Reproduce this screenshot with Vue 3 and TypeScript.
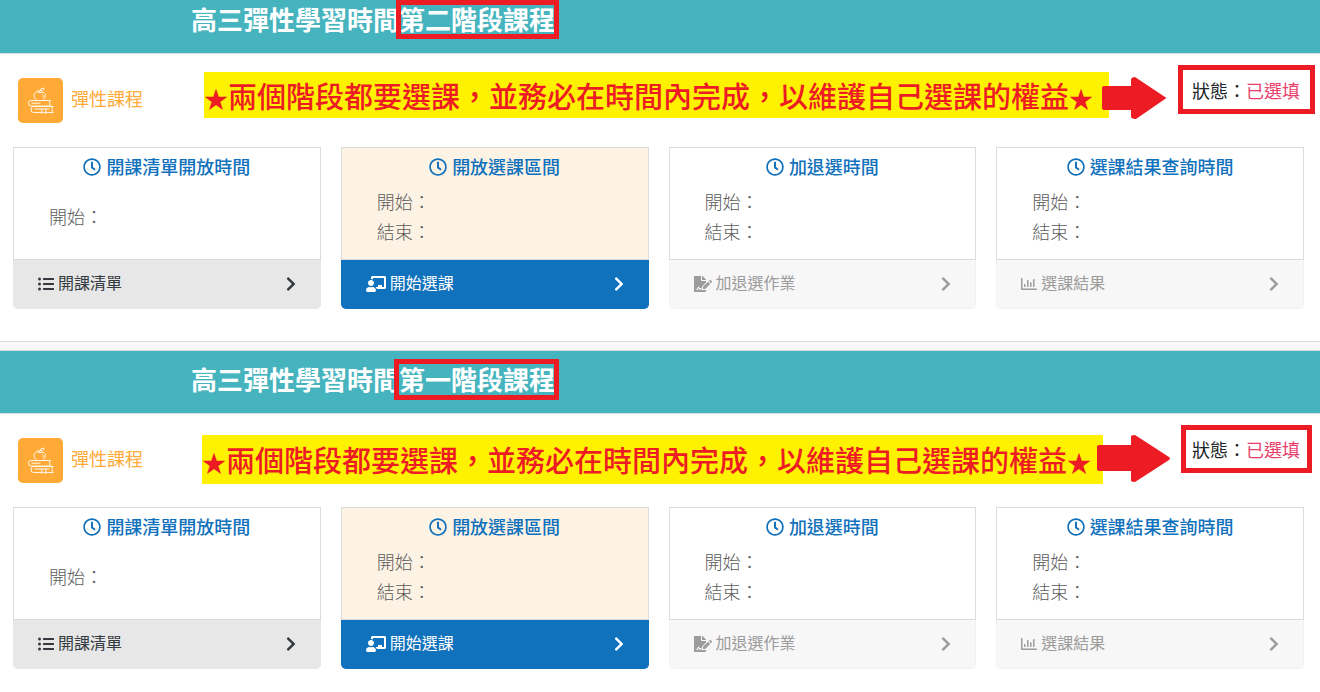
<script setup lang="ts">
interface Glyph {
  width: number
  box: string
  path: string
}

interface Stage {
  title: string
  times: string[]
  action: string
  glyph: Glyph
  state: 'normal' | 'active' | 'disabled'
}

interface Phase {
  id: string
  name: string
  arrow: { width: number; height: number; path: string }
}

const clockPath =
  'M256 8C119 8 8 119 8 256s111 248 248 248 248-111 248-248S393 8 256 8zm0 448c-110.500 0-200-89.500-200-200S145.500 56 256 56s200 89.500 200 200-89.500 200-200 200zm61.800-104.400l-84.900-61.700c-3.100-2.300-4.900-5.900-4.900-9.700V116c0-6.600 5.400-12 12-12h32c6.600 0 12 5.400 12 12v141.700l66.800 48.600c5.400 3.900 6.500 11.400 2.600 16.800L334.600 349c-3.900 5.300-11.400 6.500-16.800 2.600z'

const chevronPath =
  'M285.476 272.971L91.132 467.314c-9.373 9.373-24.569 9.373-33.941 0l-22.667-22.667c-9.357-9.357-9.375-24.522-.040-33.901L188.505 256 34.484 101.255c-9.335-9.379-9.317-24.544.040-33.901l22.667-22.667c9.373-9.373 24.569-9.373 33.941 0L285.475 239.030c9.373 9.372 9.373 24.568.001 33.941z'

const listGlyph: Glyph = {
  width: 16,
  box: '0 0 512 512',
  path: 'M48 48a48 48 0 1 0 48 48 48 48 0 0 0-48-48zm0 160a48 48 0 1 0 48 48 48 48 0 0 0-48-48zm0 160a48 48 0 1 0 48 48 48 48 0 0 0-48-48zm448 16H176a16 16 0 0 0-16 16v32a16 16 0 0 0 16 16h320a16 16 0 0 0 16-16v-32a16 16 0 0 0-16-16zm0-320H176a16 16 0 0 0-16 16v32a16 16 0 0 0 16 16h320a16 16 0 0 0 16-16V80a16 16 0 0 0-16-16zm0 160H176a16 16 0 0 0-16 16v32a16 16 0 0 0 16 16h320a16 16 0 0 0 16-16v-32a16 16 0 0 0-16-16z',
}

const teacherGlyph: Glyph = {
  width: 20,
  box: '0 0 640 512',
  path: 'M208 352c-2.390 0-4.780.350-7.060 1.090C187.980 357.300 174.350 360 160 360c-14.350 0-27.980-2.700-40.950-6.910-2.280-.740-4.660-1.090-7.050-1.090C49.940 352-.330 402.480 0 464.620.140 490.880 21.730 512 48 512h224c26.270 0 47.860-21.120 48-47.380.330-62.140-49.940-112.620-112-112.620zm-48-32c53.020 0 96-42.980 96-96s-42.980-96-96-96-96 42.980-96 96 42.980 96 96 96zM592 0H208c-26.470 0-48 22.250-48 49.590V96c23.420 0 45.100 6.780 64 17.800V64h352v288h-64v-64H384v64h-76.240c19.100 16.690 33.120 38.730 39.690 64H592c26.470 0 48-22.250 48-49.590V49.590C640 22.250 618.470 0 592 0z',
}

const signatureGlyph: Glyph = {
  width: 18,
  box: '0 0 576 512',
  path: 'M218.170 424.140c-2.950-5.920-8.090-6.520-10.170-6.520s-7.220.590-10.020 6.190l-7.670 15.340c-6.370 12.780-25.030 11.370-29.480-2.090L144 386.590l-10.610 31.880c-5.890 17.660-22.380 29.530-41 29.530H80c-8.840 0-16-7.160-16-16s7.160-16 16-16h12.390c4.830 0 9.110-3.080 10.640-7.660l18.190-54.640c3.300-9.810 12.440-16.410 22.780-16.410s19.480 6.590 22.770 16.410l13.880 41.640c19.750-16.190 54.060-9.700 66 14.160 1.890 3.780 5.490 5.950 9.360 6.260v-82.120l128-127.090V160H248c-13.200 0-24-10.800-24-24V0H24C10.700 0 0 10.700 0 24v464c0 13.300 10.700 24 24 24h336c13.300 0 24-10.700 24-24v-40l-128-.110c-16.120-.310-30.580-9.280-37.830-23.750zM384 121.900c0-6.300-2.500-12.400-7-16.900L279.100 7c-4.500-4.500-10.600-7-17-7H256v128h128v-6.100zm-96 225.060V416h68.990l161.680-162.780-67.880-67.880L288 346.960zm280.540-179.630l-31.870-31.870c-9.940-9.940-26.070-9.940-36.010 0l-27.250 27.250 67.880 67.880 27.250-27.250c9.950-9.940 9.950-26.070 0-36.010z',
}

const chartGlyph: Glyph = {
  width: 16,
  box: '0 0 512 512',
  path: 'M496 400H48V80c0-8.840-7.160-16-16-16H16C7.160 64 0 71.160 0 80v336c0 17.670 14.330 32 32 32h464c8.840 0 16-7.160 16-16v-16c0-8.840-7.160-16-16-16zM109 256h22q13 0 13 13v70q0 13-13 13h-22q-13 0-13-13v-70q0-13 13-13zM205 128h22q13 0 13 13v198q0 13-13 13h-22q-13 0-13-13V141q0-13 13-13zM301 192h22q13 0 13 13v134q0 13-13 13h-22q-13 0-13-13V205q0-13 13-13zM397 96h22q13 0 13 13v230q0 13-13 13h-22q-13 0-13-13V109q0-13 13-13z',
}

const stages: Stage[] = [
  { title: '開課清單開放時間', times: ['開始：'], action: '開課清單', glyph: listGlyph, state: 'normal' },
  { title: '開放選課區間', times: ['開始：', '結束：'], action: '開始選課', glyph: teacherGlyph, state: 'active' },
  { title: '加退選時間', times: ['開始：', '結束：'], action: '加退選作業', glyph: signatureGlyph, state: 'disabled' },
  { title: '選課結果查詢時間', times: ['開始：', '結束：'], action: '選課結果', glyph: chartGlyph, state: 'disabled' },
]

const phases: Phase[] = [
  {
    id: 'second',
    name: '第二階段課程',
    arrow: { width: 64, height: 42, path: 'M2 9H29V2Q30 0 33 0L63 20Q65 21 63 22L34 42Q30 42 29 40V33H2Q0 33 0 31V11Q0 9 2 9Z' },
  },
  {
    id: 'first',
    name: '第一階段課程',
    arrow: { width: 73, height: 47, path: 'M2 10H34V1Q35 0 38 0L72 22Q74 23 72 25L38 47Q35 47 34 46V36H2Q0 36 0 34V12Q0 10 2 10Z' },
  },
]
</script>

<template>
  <main class="page" lang="zh-Hant">
    <section v-for="phase in phases" :key="phase.id" class="panel" :class="phase.id">
      <header class="banner">
        <h1>高三彈性學習時間<span class="phase-name">{{ phase.name }}</span></h1>
      </header>

      <div class="summary">
        <div class="category-icon">
          <svg viewBox="0 0 26 27" width="26" height="27" aria-hidden="true">
            <g fill="none" stroke="#fff" stroke-linecap="round" stroke-linejoin="round" opacity="0.9">
              <path d="M8.500 13C5 11 5 5.500 9 5Q10.500 5 11.700 5.700Q14 4.500 16 5.700C18.500 7.500 17.500 11.500 15 13" />
              <path d="M11.700 5.700Q11 3.500 9.500 3M11.700 4Q12 1 16 1Q16 4 11.700 4M14.500 7.500Q16 8.500 15.500 10" />
              <path d="M22.500 13.500H3Q.500 13.500 .500 16.200T3 19H22.500M22 13.500Q20.800 16.200 22 19M4 16.200H12" />
              <path d="M25.200 19.500H5.500Q3 19.500 3 22.500T5.500 25.500H13.500M18 25.500H25.200M24.500 19.500Q23.300 22.500 24.500 25.500M7 22H21" />
              <path d="M13.800 22V26.500L15.800 25L17.800 26.500V22" />
            </g>
          </svg>
        </div>
        <h2 class="category">彈性課程</h2>
        <p class="notice"><span class="star">★</span>兩個階段都要選課，並務必在時間內完成，以維護自己選課的權益<span class="star">★</span></p>
        <svg
          class="arrow"
          :width="phase.arrow.width"
          :height="phase.arrow.height"
          :viewBox="`0 0 ${phase.arrow.width} ${phase.arrow.height}`"
          aria-hidden="true"
        >
          <path :d="phase.arrow.path" fill="#ed1c24" />
        </svg>
        <p class="status">狀態：<span class="status-value">已選填</span></p>
      </div>

      <div class="stages">
        <article v-for="stage in stages" :key="stage.title" class="card" :class="stage.state">
          <div class="card-body">
            <h3>
              <svg viewBox="0 0 512 512" width="18" height="18" aria-hidden="true"><path :d="clockPath" fill="currentColor" /></svg>
              <span>{{ stage.title }}</span>
            </h3>
            <div class="times">
              <p v-for="time in stage.times" :key="time">{{ time }}</p>
            </div>
          </div>
          <button type="button" class="action" :disabled="stage.state === 'disabled'">
            <svg :viewBox="stage.glyph.box" :width="stage.glyph.width" height="16" aria-hidden="true">
              <path :d="stage.glyph.path" fill="currentColor" />
            </svg>
            <span>{{ stage.action }}</span>
            <svg class="chevron" viewBox="0 0 320 512" width="10" height="16" aria-hidden="true">
              <path :d="chevronPath" fill="currentColor" />
            </svg>
          </button>
        </article>
      </div>
    </section>
  </main>
</template>

<style>
body {
  margin: 0;
  background: #fff;
}
</style>

<style scoped>
.page {
  background: #f8f8f8;
  font-family: "Noto Sans CJK TC", "Noto Sans", sans-serif;
  color: #212529;
}

h1,
h2,
h3,
p {
  margin: 0;
}

svg {
  display: block;
  flex: none;
}

.panel {
  background: #fff;
}

.panel.second {
  padding-bottom: 32px;
  border-bottom: 1px solid #dcdcdc;
}

.panel.first {
  margin-top: 8px;
  border-top: 1px solid #dcdcdc;
}

.banner {
  padding: 0 20px 15px 191px;
  background: #46b4be;
  border-bottom: 1px solid #dcdcdc;
  color: #fff;
}

.first .banner {
  padding-top: 9px;
}

.banner h1 {
  font-size: 26px;
  line-height: 38px;
  font-weight: 700;
  white-space: nowrap;
}

.phase-name {
  position: relative;
  display: inline-block;
}

.phase-name::after {
  content: "";
  position: absolute;
  inset: 0 -4px -1px -3px;
  border: 5px solid #ed1c24;
}

.first .phase-name::after {
  inset: -1px -4px -2px -5px;
}

.summary {
  display: flex;
  align-items: flex-start;
  min-height: 93px;
  padding-left: 18px;
  padding-right: 5px;
  white-space: nowrap;
}

.first .summary {
  padding-right: 8px;
}

.category-icon {
  display: flex;
  align-items: center;
  justify-content: center;
  flex: none;
  width: 45px;
  height: 45px;
  margin-top: 24px;
  border-radius: 5px;
  background: #ffaa37;
}

.category {
  margin: 29px 0 0 8px;
  font-size: 18px;
  line-height: 30px;
  font-weight: 400;
  color: #ffaa37;
}

.notice {
  margin: 18px 0 0 61px;
  padding-right: 16px;
  background: #fff200;
  color: #ed1c24;
  font-size: 29px;
  line-height: 46px;
  font-weight: 500;
}

.first .notice {
  margin-top: 21px;
  margin-left: 59px;
  padding-right: 12px;
  line-height: 49px;
}

.star {
  display: inline-block;
  font-size: 24px;
  line-height: 1;
}

.arrow {
  margin: 23px 0 0 -7px;
}

.first .arrow {
  margin: 21px 0 0 -6px;
}

.status {
  margin: 11px 0 0 auto;
  padding: 2px 10px 0 9px;
  border: 5px solid #ed1c24;
  font-size: 18px;
  line-height: 37px;
}

.first .status {
  padding: 1px 7px 0 6px;
}

.status-value {
  color: #e83e6c;
}

.stages {
  display: grid;
  grid-template-columns: repeat(4, minmax(0, 1fr));
  gap: 20px;
  padding: 0 16px 0 13px;
}

.first .stages {
  padding-bottom: 20px;
}

.card {
  display: flex;
  flex-direction: column;
}

.card-body {
  display: flex;
  flex: 1;
  flex-direction: column;
  padding: 4px 0 13px;
  border: 1px solid #dcdcdc;
}

.active .card-body {
  background: #fdf3e4;
}

.card h3 {
  display: flex;
  align-items: center;
  justify-content: center;
  gap: 5px;
  font-size: 18px;
  line-height: 28px;
  font-weight: 500;
  color: #1071bd;
}

.card h3 span {
  padding-bottom: 2px;
}

.times {
  display: flex;
  flex-direction: column;
  justify-content: center;
  min-height: 60px;
  margin-top: 4px;
  padding-left: 35px;
  color: #5c5c5c;
  font-size: 18px;
  line-height: 30px;
  font-weight: 300;
}

.action {
  display: flex;
  align-items: center;
  gap: 4px;
  width: 100%;
  padding: 0 24px;
  border: 1px solid #e7e7e7;
  border-top: 0;
  border-radius: 0 0 5px 5px;
  background: #e7e7e7;
  color: #343a40;
  font-family: inherit;
  font-size: 16px;
  line-height: 44px;
  text-align: left;
  cursor: pointer;
}

.action span {
  padding-bottom: 4px;
}

.active .action {
  border-color: #1071bd;
  background: #1071bd;
  color: #fff;
}

.disabled .action {
  border-color: #f2f2f2;
  background: #f7f7f7;
  color: #9c9c9c;
  cursor: default;
}

.chevron {
  margin-left: auto;
}
</style>
